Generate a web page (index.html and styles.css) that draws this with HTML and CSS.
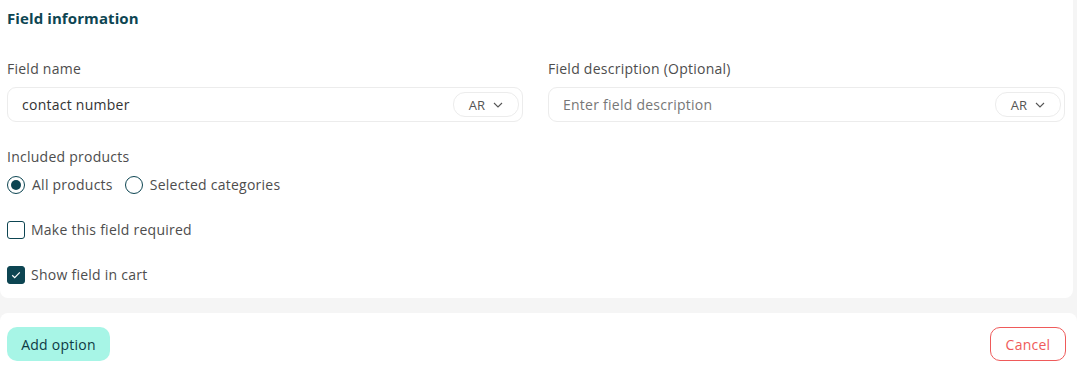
FILE: index.html
```html
<!DOCTYPE html>
<html>
<head>
<meta charset="utf-8">
<link rel="stylesheet" href="styles.css">
</head>
<body>
<div class="page">
  <section class="card top">
    <h2 class="title">Field information</h2>
    <div class="fields">
      <div class="field">
        <label class="label">Field name</label>
        <div class="input">
          <span class="value">contact number</span>
          <span class="lang">AR <svg width="10" height="6" viewBox="0 0 10 6"><path d="M1 1l4 4 4-4" fill="none" stroke="#555" stroke-width="1.1"/></svg></span>
        </div>
      </div>
      <div class="field">
        <label class="label">Field description (Optional)</label>
        <div class="input">
          <span class="placeholder">Enter field description</span>
          <span class="lang">AR <svg width="10" height="6" viewBox="0 0 10 6"><path d="M1 1l4 4 4-4" fill="none" stroke="#555" stroke-width="1.1"/></svg></span>
        </div>
      </div>
    </div>
    <div class="label included">Included products</div>
    <div class="radios">
      <span class="opt"><span class="radio on"></span>All products</span>
      <span class="opt"><span class="radio"></span>Selected categories</span>
    </div>
    <div class="check-row first"><span class="box"></span>Make this field required</div>
    <div class="check-row"><span class="box on"><svg width="10" height="8" viewBox="0 0 10 8"><path d="M1.2 4.2l2.5 2.4L8.8 1.4" fill="none" stroke="#fff" stroke-width="1.2"/></svg></span>Show field in cart</div>
  </section>
  <section class="card bottom">
    <button class="btn add">Add option</button>
    <button class="btn cancel">Cancel</button>
  </section>
</div>
</body>
</html>
```
FILE: styles.css
```css
* { box-sizing: border-box; }
html, body { margin: 0; padding: 0; }
body {
  background: #f5f5f5;
  font-family: "Open Sans", "Noto Sans", sans-serif;
  color: #4d4d4d;
  letter-spacing: 0.25px;
  width: 1077px;
  height: 367px;
  overflow: hidden;
}
.page { display: flex; flex-direction: column; }
.card { background: #fff; }
.top {
  height: 298px;
  margin-right: 4px;
  border-radius: 0 0 8px 8px;
  padding: 9px 7px 0 7px;
}
.title {
  margin: 0;
  font-size: 15px;
  font-weight: 700;
  color: #0d4552;
  line-height: 18px;
  letter-spacing: 0.1px;
}
.fields {
  display: grid;
  grid-template-columns: 516px 517px;
  column-gap: 25px;
  margin-top: 33px;
}
.label {
  display: block;
  font-size: 14px;
  line-height: 18px;
  color: #4d4d4d;
}
.input {
  margin-top: 9px;
  height: 35px;
  border: 1px solid #ececec;
  border-radius: 9px;
  display: flex;
  align-items: center;
  justify-content: space-between;
  padding: 0 3px 0 14px;
  font-size: 14px;
}
.value { color: #333; }
.placeholder { color: #777; }
.lang {
  width: 66px;
  height: 25px;
  border: 1px solid #ececec;
  border-radius: 12px;
  display: flex;
  align-items: center;
  justify-content: center;
  gap: 8px;
  font-size: 13px;
  color: #555;
}
.included { margin-top: 26px; }
.radios {
  display: flex;
  gap: 12px;
  margin-top: 10px;
  font-size: 14px;
  line-height: 18px;
}
.opt { display: flex; align-items: center; gap: 7px; }
.radio {
  width: 18px; height: 18px;
  border: 1.5px solid #0d4552;
  border-radius: 50%;
  display: flex; align-items: center; justify-content: center;
}
.radio.on::after {
  content: "";
  width: 10px; height: 10px;
  border-radius: 50%;
  background: #0d4552;
}
.check-row {
  display: flex;
  align-items: center;
  gap: 6px;
  font-size: 14px;
  line-height: 18px;
  margin-top: 27px;
}
.check-row.first { margin-top: 27px; }
.box {
  width: 18px; height: 18px;
  border: 1.5px solid #0d4552;
  border-radius: 3px;
  display: flex; align-items: center; justify-content: center;
}
.box.on { background: #0d4552; }
.bottom {
  margin-top: 15px;
  height: 54px;
  border-radius: 8px 8px 0 0;
  display: flex;
  justify-content: space-between;
  align-items: flex-start;
  padding: 14px 11px 0 7px;
}
.btn {
  font-family: inherit;
  letter-spacing: inherit;
  font-size: 14px;
  height: 34px;
  border-radius: 10px;
  cursor: pointer;
}
.add {
  width: 103px;
  background: #a7f5e6;
  border: none;
  color: #0d3a44;
}
.cancel {
  width: 76px;
  background: #fff;
  border: 1px solid #ef5a5a;
  color: #ef5a5a;
}
```
